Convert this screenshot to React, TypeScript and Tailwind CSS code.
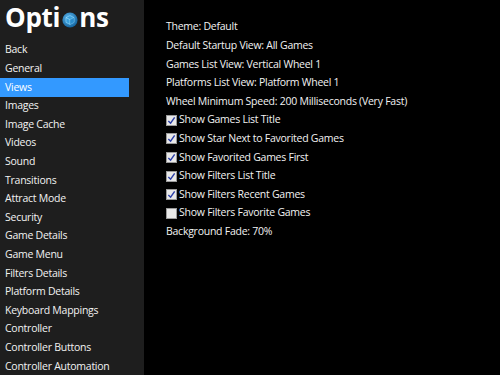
const menu = [
  "Back",
  "General",
  "Views",
  "Images",
  "Image Cache",
  "Videos",
  "Sound",
  "Transitions",
  "Attract Mode",
  "Security",
  "Game Details",
  "Game Menu",
  "Filters Details",
  "Platform Details",
  "Keyboard Mappings",
  "Controller",
  "Controller Buttons",
  "Controller Automation",
];

type Row = { label: string; check?: boolean };

const rows: Row[] = [
  { label: "Theme: Default" },
  { label: "Default Startup View: All Games" },
  { label: "Games List View: Vertical Wheel 1" },
  { label: "Platforms List View: Platform Wheel 1" },
  { label: "Wheel Minimum Speed: 200 Milliseconds (Very Fast)" },
  { label: "Show Games List Title", check: true },
  { label: "Show Star Next to Favorited Games", check: true },
  { label: "Show Favorited Games First", check: true },
  { label: "Show Filters List Title", check: true },
  { label: "Show Filters Recent Games", check: true },
  { label: "Show Filters Favorite Games", check: false },
  { label: "Background Fade: 70%" },
];

function Globe() {
  return (
    <svg viewBox="0 0 20 20" className="w-[16px] h-[16px] mx-[1.5px] mb-[2px]">
      <defs>
        <radialGradient id="g" cx="40%" cy="35%" r="70%">
          <stop offset="0%" stopColor="#5fb8ee" />
          <stop offset="100%" stopColor="#0e5f9a" />
        </radialGradient>
      </defs>
      <circle cx="10" cy="10" r="9.5" fill="url(#g)" />
      <path d="M10 4.5 L15 7 L15 13 L10 15.5 L5 13 L5 7 Z" fill="#3aa0dd" stroke="#9fe0ff" strokeWidth="0.7" />
      <path d="M5 7 L10 9.5 L15 7 M10 9.5 L10 15.5" fill="none" stroke="#bdf0ff" strokeWidth="0.7" />
      <path d="M10 9.5 L15 7 L15 13 L10 15.5 Z" fill="#1f7fbf" opacity="0.6" />
    </svg>
  );
}

function Check({ on }: { on: boolean }) {
  return (
    <span className="w-[11px] h-[11px] bg-[#e8e8e8] border border-[#9a9a9a] flex items-center justify-center mr-[2px]">
      {on && (
        <svg viewBox="0 0 10 10" className="w-[9px] h-[9px]">
          <path d="M1.5 5.5 L4 8 L8.5 1.5" fill="none" stroke="#2b3fa8" strokeWidth="1.6" />
        </svg>
      )}
    </span>
  );
}

export default function App() {
  return (
    <div
      className="flex w-[500px] h-[375px] overflow-hidden bg-black text-[#f2f2f2]"
      style={{ fontFamily: '"Open Sans", "Noto Sans", sans-serif' }}
    >
      <aside className="w-[144px] shrink-0 bg-[#1e1e1e]">
        <div className="flex items-end h-[30px] pl-[5px] text-[26px] font-bold leading-none tracking-[-0.3px] text-white">
          <span>Opti</span>
          <Globe />
          <span>ns</span>
        </div>
        <ul className="mt-[11px] text-[10.5px] tracking-[-0.25px]">
          {menu.map((m) => (
            <li
              key={m}
              className={
                m === "Views"
                  ? "h-[18.6px] w-[129px] flex items-center pl-[5px] bg-[#3399ff] text-white"
                  : "h-[18.6px] flex items-center pl-[5px]"
              }
            >
              {m}
            </li>
          ))}
        </ul>
      </aside>
      <main className="flex-1 pl-[22px] pt-[18px] text-[10.5px] tracking-[-0.25px]">
        {rows.map((r) => (
          <div key={r.label} className="h-[18.6px] flex items-center">
            {r.check !== undefined && <Check on={r.check} />}
            {r.label}
          </div>
        ))}
      </main>
    </div>
  );
}
